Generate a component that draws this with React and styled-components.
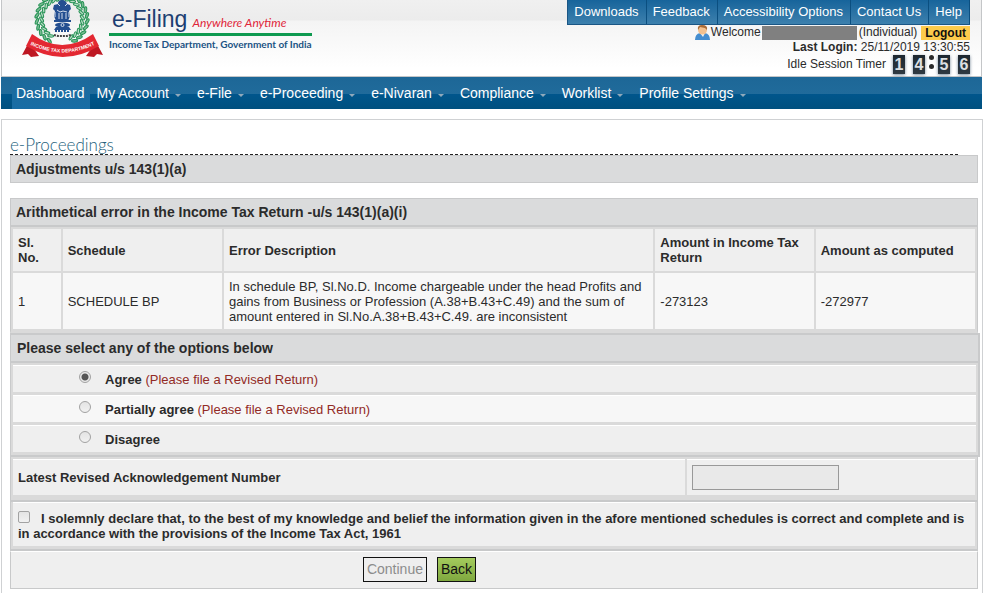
import React, { useState } from "react"
import styled, { createGlobalStyle } from "styled-components"

const GlobalStyle = createGlobalStyle`
  * {
    box-sizing: border-box;
  }
  body {
    margin: 0;
    background: #fff;
    color: #2b2b2b;
    font: 13px/15px "Liberation Sans", Arial, sans-serif;
    overflow-x: hidden;
  }
  button,
  input {
    font: inherit;
    margin: 0;
  }
`

const Page = styled.div`
  padding: 0 9px 0 1px;
`

const Header = styled.header`
  display: flex;
  justify-content: space-between;
  height: 77px;
  margin-right: 1px;
  padding: 0 11px 0 20px;
  border: solid #c4c6c8;
  border-width: 0 1px 1px;
  background: linear-gradient(#f0f0f0, #ececec 26%, #f4f4f4 28%, #fff 90%);
`

const Brand = styled.div`
  display: flex;
  gap: 6px;
`

const BrandText = styled.div`
  padding-top: 5px;
  white-space: nowrap;
`

const BrandName = styled.div`
  display: flex;
  align-items: baseline;
  gap: 5px;
  height: 31px;
  padding-left: 3px;
  border-bottom: 3px solid #0f9a50;
  color: #1d3f72;
  font-size: 23px;
  line-height: 28px;
`

const Tagline = styled.em`
  color: #e0263a;
  font: italic 12px/16px Lato, sans-serif;
`

const Department = styled.div`
  color: #1b5384;
  font: bold 10px/17px Lato, sans-serif;
`

const UserArea = styled.div`
  display: flex;
  flex-direction: column;
  align-items: flex-end;
  font-size: 12px;
  white-space: nowrap;
`

const TopLinks = styled.nav`
  display: flex;
  border-left: 1px solid #1a5685;
  border-bottom: 1px solid #1a5685;
`

const TopLink = styled.a`
  padding: 0 7px 0 6px;
  border-right: 1px solid #0b4f80;
  background: linear-gradient(#17649b, #3d80ad);
  color: #fff;
  font-size: 13px;
  line-height: 24px;
  text-decoration: none;
`

const WelcomeLine = styled.div`
  display: flex;
  align-items: center;
  height: 15px;
`

const HiddenName = styled.span`
  width: 95px;
  height: 14px;
  margin: 0 2px 0 1px;
  background: #808080;
`

const Logout = styled.a`
  margin-left: 4px;
  padding: 0 4px;
  background: #fdcb4b;
  color: #111;
  font-weight: bold;
  line-height: 14px;
  text-decoration: none;
`

const LoginLine = styled.div`
  line-height: 14px;
`

const TimerLine = styled.div`
  display: flex;
  align-items: center;
  height: 21px;
`

const Digits = styled.div`
  display: flex;
  align-items: center;
  margin-left: 7px;
`

const Digit = styled.span`
  width: 12px;
  margin-left: ${({ $gap }) => $gap || 0}px;
  background: linear-gradient(#1d2730, #303a42);
  box-shadow: 0 1px 3px #789;
  color: #dde0e2;
  font-size: 16px;
  font-weight: bold;
  line-height: 19px;
  text-align: center;
`

const Colon = styled.span`
  display: flex;
  flex-direction: column;
  gap: 4px;
  width: 13px;
  padding-bottom: 6px;
  align-items: center;
  &::before,
  &::after {
    content: "";
    width: 5px;
    height: 5px;
    border-radius: 50%;
    background: #2b2b2b;
  }
`

const MainNav = styled.nav`
  display: flex;
  height: 32px;
  margin-right: 1px;
  padding-left: 11px;
  background: linear-gradient(#1d6797, #206b9b 53%, #00568c 53%, #00507f);
`

const NavItem = styled.a`
  display: flex;
  align-items: center;
  gap: 6px;
  margin-right: 3px;
  padding: 0 ${({ $active }) => ($active ? 5 : 4)}px 0 4px;
  background: ${({ $active }) =>
    $active ? "linear-gradient(#1d6a9b, #186da5)" : "none"};
  color: #fff;
  font-size: 14px;
  text-decoration: none;
  white-space: nowrap;
  &:not(:first-child)::after {
    content: "";
    margin: 4px 5px 0 0;
    border: solid transparent;
    border-width: 3px 3px 0;
    border-top-color: #8fa9bb;
  }
`

const Panel = styled.main`
  margin-top: 10px;
  padding: 17px 4px 20px 8px;
  border: 1px solid #cfd1d3;
  border-bottom: 0;
`

const Title = styled.h1`
  margin: 0 20px 0 0;
  padding-bottom: 2px;
  border-bottom: 1px dashed #222;
  color: #23617c;
  font: 300 17px/15px Lato, sans-serif;
`

const Bar = styled.h2`
  margin: 0 0 ${({ $gap }) => $gap || 0}px;
  padding: 5px;
  border: 1px solid #c8c9ca;
  border-bottom-width: ${({ $thick }) => ($thick ? 2 : 1)}px;
  background: #dadbdc;
  font-size: 14px;
  line-height: 16px;
`

const ErrorTable = styled.table`
  width: 100%;
  border: solid #c8c9ca;
  border-width: 0 1px 2px;
  border-bottom-color: #dadada;
  border-spacing: 2px;
  background: #dadada;
  table-layout: fixed;
  th,
  td {
    padding: 0 5px;
    text-align: left;
  }
  th {
    height: 42px;
    background: #efefef;
  }
  td {
    height: 56px;
    background: #f7f7f7;
  }
`

const Options = styled.fieldset`
  min-width: 0;
  margin: 0 -2px 0 0;
  padding: 0 2px;
  border: 2px solid #c9cacb;
  border-left-width: 1px;
  background: #dadada;
`

const OptionsTitle = styled.h2`
  margin: 0 -2px 2px;
  padding: 5px 6px;
  border-bottom: 2px solid #c9cacb;
  background: #dadbdc;
  font-size: 14px;
  line-height: 16px;
`

const Option = styled.label`
  display: flex;
  align-items: center;
  gap: 14px;
  height: 27px;
  margin-bottom: 3px;
  padding-left: 66px;
  border-top: 1px solid #fff;
  background: ${({ $light }) => ($light ? "#f7f7f7" : "#efefef")};
  font-weight: bold;
`

const Note = styled.span`
  color: #922b26;
  font-weight: normal;
`

const Radio = styled.input`
  appearance: none;
  width: 12px;
  height: 12px;
  margin-bottom: 4px;
  border: 1px solid #a2a2a2;
  border-radius: 50%;
  background: linear-gradient(#e4e4e4, #f1f1f1);
  &:checked {
    background: radial-gradient(circle, #555 3px, #e9e9e9 4px);
  }
`

const AckRow = styled.div`
  display: grid;
  grid-template-columns: 7fr 3fr;
  gap: 2px;
  padding: 2px 2px 5px;
  border: solid #c8c9ca;
  border-width: 0 1px;
  background: #dadada;
`

const AckCell = styled.div`
  display: flex;
  align-items: center;
  height: 36px;
  padding: 0 5px;
  border-top: 1px solid #fff;
  background: #efefef;
  font-weight: bold;
`

const AckInput = styled.input`
  width: 147px;
  height: 25px;
  border: 1px solid #999;
  background: #e9e9e9;
`

const Declaration = styled.div`
  padding: 0 2px 3px;
  border: solid #c8c9ca;
  border-width: 2px 1px;
  background: #dadada;
`

const DeclarationText = styled.label`
  display: block;
  padding: 8px 5px 5px;
  border-top: 1px solid #fff;
  background: #efefef;
  font-weight: bold;
`

const Checkbox = styled.input`
  appearance: none;
  width: 12px;
  height: 12px;
  margin-right: 11px;
  border: 1px solid #a2a2a2;
  border-radius: 2px;
  background: linear-gradient(#e4e4e4, #f1f1f1);
  &:checked {
    background: #555;
  }
`

const Actions = styled.div`
  display: flex;
  gap: 10px;
  justify-content: center;
  padding: 5px 149px 6px 0;
  border: 1px solid #c8c9ca;
  border-top-color: #fff;
  background: #efefef;
`

const Button = styled.button`
  height: 25px;
  padding: 0 3px;
  border: 1px solid #111;
  background: linear-gradient(#a4cb5d, #7fa83f);
  color: #111;
  font-size: 14px;
  &:disabled {
    background: #eee;
    color: #8c8c8c;
  }
`

const leaves = Array.from({ length: 23 }, (_, i) => -150 + (i * 300) / 22)

const Emblem = () => (
  <svg width="81" height="60" viewBox="0 0 81 60" aria-hidden="true">
    <g fill="none" stroke="#249254" strokeWidth="1">
      <path d="M27 41A25 25 0 1 1 53 41" />
      {leaves.map(a => (
        <g key={a} transform={`translate(40 19) rotate(${a}) translate(0 -23)`}>
          <ellipse cx="-1" cy="-2" rx="3" ry="1.3" fill="#79bc92" transform="rotate(28)" />
          <ellipse cx="0" cy="3" rx="3" ry="1.2" fill="#b7dcc4" transform="rotate(-28)" />
        </g>
      ))}
    </g>
    <g fill="#244f91">
      <path d="M36 4Q36 0 40 0t5 4l3 1 1 4-2 2 1 5-2 5H34l-2-5 1-5-2-2 1-4z" />
      <rect x="32" y="20" width="17" height="2" />
      <ellipse cx="40.500" cy="25" rx="7.500" ry="2.500" />
      <path d="M34 27h13l2 3H32z" />
    </g>
    <g stroke="#d5deeb" strokeWidth="1" fill="none">
      <path d="M36 4l2 2m5 0l2-2M35 10l3 2 3-1 4 1M37 13v6m3-6v6m4-6v6M33 12v5m14-5v5" />
      <circle cx="40.500" cy="25" r="1.500" />
    </g>
    <path d="M33 31h15" stroke="#244f91" strokeWidth="2" strokeDasharray="2 1" />
    <path d="M32 35l4 1h9l4-1" stroke="#444" strokeWidth="2" strokeDasharray="2 1" fill="none" />
    <path d="M7 42L0 55l6-1 3 3 8-1zM74 42l7 13-6-1-3 3-8-1z" fill="#be1823" />
    <path d="M10 34Q40 56 71 34L77 46Q41 68 4 46z" fill="#e32832" />
    <path id="ribbon" d="M5 43Q40.500 62 76 43" fill="none" />
    <text fill="#fff" fontFamily="Liberation Sans, sans-serif" fontSize="5" fontWeight="bold" textAnchor="middle">
      <textPath href="#ribbon" startOffset="50%">INCOME TAX DEPARTMENT</textPath>
    </text>
  </svg>
)

const UserIcon = () => (
  <svg width="17" height="17" viewBox="0 0 17 17" aria-hidden="true">
    <path d="M1 16q0-6 5-7h5q5 1 5 7z" fill="#458ed0" />
    <path d="M6 9h5l-2 4z" fill="#f7f4ed" />
    <circle cx="8.500" cy="6" r="4.500" fill="#f3c18f" />
    <path d="M4 6Q3 1 8 1q6 0 5 5l-2-2-5-1z" fill="#a96a35" />
  </svg>
)

const topLinks = ["Downloads", "Feedback", "Accessibility Options", "Contact Us", "Help"]

const navItems = [
  "Dashboard",
  "My Account",
  "e-File",
  "e-Proceeding",
  "e-Nivaran",
  "Compliance",
  "Worklist",
  "Profile Settings",
]

const options = [
  { label: "Agree", note: "(Please file a Revised Return)" },
  { label: "Partially agree", note: "(Please file a Revised Return)" },
  { label: "Disagree" },
]

const App = () => {
  const [choice, setChoice] = useState("Agree")

  return (
    <Page>
      <GlobalStyle />
      <Header>
        <Brand>
          <Emblem />
          <BrandText>
            <BrandName>
              e-Filing <Tagline>Anywhere Anytime</Tagline>
            </BrandName>
            <Department>Income Tax Department, Government of India</Department>
          </BrandText>
        </Brand>
        <UserArea>
          <TopLinks>
            {topLinks.map(link => (
              <TopLink href="#" key={link}>
                {link}
              </TopLink>
            ))}
          </TopLinks>
          <WelcomeLine>
            <UserIcon />
            Welcome
            <HiddenName />
            (Individual)
            <Logout href="#">Logout</Logout>
          </WelcomeLine>
          <LoginLine>
            <b>Last Login:</b> 25/11/2019 13:30:55
          </LoginLine>
          <TimerLine>
            Idle Session Timer
            <Digits>
              <Digit>1</Digit>
              <Digit $gap={8}>4</Digit>
              <Colon />
              <Digit>5</Digit>
              <Digit $gap={8}>6</Digit>
            </Digits>
          </TimerLine>
        </UserArea>
      </Header>
      <MainNav>
        {navItems.map((item, i) => (
          <NavItem href="#" key={item} $active={i === 0}>
            {item}
          </NavItem>
        ))}
      </MainNav>
      <Panel>
        <Title>e-Proceedings</Title>
        <Bar $gap={15}>Adjustments u/s 143(1)(a)</Bar>
        <Bar $thick>Arithmetical error in the Income Tax Return -u/s 143(1)(a)(i)</Bar>
        <ErrorTable>
          <colgroup>
            <col width="5%" />
            <col width="16.7%" />
            <col />
            <col width="16.6%" />
            <col width="16.7%" />
          </colgroup>
          <thead>
            <tr>
              <th>Sl. No.</th>
              <th>Schedule</th>
              <th>Error Description</th>
              <th>Amount in Income Tax Return</th>
              <th>Amount as computed</th>
            </tr>
          </thead>
          <tbody>
            <tr>
              <td>1</td>
              <td>SCHEDULE BP</td>
              <td>
                In schedule BP, Sl.No.D. Income chargeable under the head Profits and gains from
                Business or Profession (A.38+B.43+C.49) and the sum of amount entered in
                Sl.No.A.38+B.43+C.49. are inconsistent
              </td>
              <td>-273123</td>
              <td>-272977</td>
            </tr>
          </tbody>
        </ErrorTable>
        <Options>
          <OptionsTitle>Please select any of the options below</OptionsTitle>
          {options.map(({ label, note }, i) => (
            <Option key={label} $light={i === 1}>
              <Radio
                type="radio"
                name="response"
                checked={choice === label}
                onChange={() => setChoice(label)}
              />
              <span>
                {label} {note && <Note>{note}</Note>}
              </span>
            </Option>
          ))}
        </Options>
        <AckRow>
          <AckCell>
            <label htmlFor="ack">Latest Revised Acknowledgement Number</label>
          </AckCell>
          <AckCell>
            <AckInput id="ack" type="text" />
          </AckCell>
        </AckRow>
        <Declaration>
          <DeclarationText>
            <Checkbox type="checkbox" />I solemnly declare that, to the best of my knowledge and
            belief the information given in the afore mentioned schedules is correct and complete
            and is in accordance with the provisions of the Income Tax Act, 1961
          </DeclarationText>
        </Declaration>
        <Actions>
          <Button disabled>Continue</Button>
          <Button>Back</Button>
        </Actions>
      </Panel>
    </Page>
  )
}

export default App
